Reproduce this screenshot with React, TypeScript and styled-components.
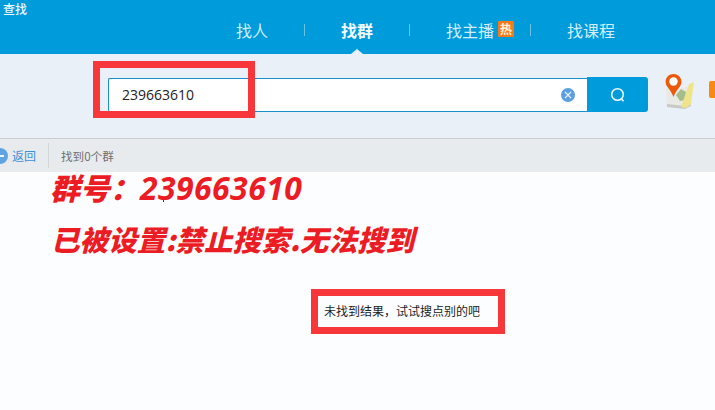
import React from "react";
import styled, { createGlobalStyle } from "styled-components";

const Global = createGlobalStyle`
  html, body { margin: 0; padding: 0; background: #fcfdff; }
  body { font-family: "Noto Sans CJK SC", "Liberation Sans", sans-serif; }
`;
const Page = styled.div`
  position: relative; width: 715px; height: 410px; overflow: hidden;
  display: flex; flex-direction: column; background: #fcfdff;
`;
const Header = styled.header`
  position: relative; flex: 0 0 54px; background: #009bdb; display: flex; align-items: flex-start;
`;
const Title = styled.div`
  position: absolute; left: 3px; top: 0; color: #eef8fd; font-size: 12px; line-height: 18px; font-weight: 500;
`;
const Nav = styled.nav`
  display: flex; align-items: center; height: 22px; margin: 19px 0 0 236px;
`;
const NavItem = styled.span<{ $active?: boolean }>`
  position: relative; color: ${p => (p.$active ? "#f4fbff" : "#d3eef9")};
  font-size: 16px; line-height: 22px; font-weight: ${p => (p.$active ? 700 : 400)}; white-space: nowrap;
`;
const Sep = styled.i<{ $w: number; $r: number }>`
  display: block; width: 1px; height: 12px; background: #6cc3e8;
  margin-left: ${p => p.$w}px; margin-right: ${p => p.$r}px;
`;
const Badge = styled.span`
  display: inline-block; width: 16px; height: 16px; background: #f47a1c; color: #fff3d8;
  font-size: 12px; line-height: 15px; text-align: center; font-weight: 700;
  margin-left: 4px; vertical-align: 3px; border-radius: 1px;
`;
const Caret = styled.i`
  position: absolute; left: 351px; top: 49px; width: 0; height: 0;
  border-left: 6px solid transparent; border-right: 6px solid transparent; border-bottom: 5px solid #eaf0f8;
`;
const SearchBand = styled.section`
  flex: 0 0 84px; background: #eaf0f8; display: flex; align-items: flex-start; padding: 23px 0 0 108px; box-sizing: border-box;
`;
const SearchBox = styled.div`
  box-sizing: border-box; width: 479px; height: 34px; margin-top: 1px; background: #fff;
  border: 1px solid #1a8fcb; border-right: 0; border-radius: 2px 0 0 2px;
  display: flex; align-items: center; justify-content: space-between; padding: 0 12px 0 13px;
`;
const Query = styled.span`
  font-family: "Open Sans", "Noto Sans", sans-serif; font-size: 14px; color: #222; line-height: 20px;
`;
const SearchButton = styled.div`
  width: 61px; height: 35px; background: #009bdb; border-radius: 0 3px 3px 0;
  display: flex; align-items: center; justify-content: center;
`;
const MapWrap = styled.div`
  margin: -3px 0 0 17px; width: 30px; height: 35px; flex: none;
`;
const OrangeTag = styled.div`
  width: 6px; height: 17px; margin: 4px 0 0 14px; background: #f9890f; border-radius: 2px 0 0 2px; flex: none;
`;
const Toolbar = styled.section`
  box-sizing: border-box; flex: 0 0 34px; background: #e8ebed; border-top: 1px solid #c9ccd0;
  display: flex; align-items: center; padding-left: 0;
`;
const BackIcon = styled.svg`
  width: 16px; height: 16px; margin-left: -8px; flex: none;
`;
const BackText = styled.span`
  font-size: 12px; color: #3d8fd6; margin-left: 4px; line-height: 16px;
`;
const ToolDivider = styled.i`
  display: block; width: 1px; height: 25px; background: #d3d6d9; margin: 0 12px 0 12px;
`;
const Count = styled.span`
  font-size: 11.6px; color: #6d6f70; line-height: 16px;
`;
const Content = styled.main`
  flex: 1; background: #fcfdff; padding: 131px 0 0 324px;
`;
const Empty = styled.div`
  font-size: 12px; color: #222; line-height: 16px; white-space: nowrap;
`;
const Frame = styled.div<{ $x: number; $y: number; $w: number; $h: number }>`
  position: absolute; box-sizing: border-box; left: ${p => p.$x}px; top: ${p => p.$y}px;
  width: ${p => p.$w}px; height: ${p => p.$h}px; border: 7px solid #f8373b;
`;
const Note = styled.div<{ $x: number; $y: number; $size: number }>`
  position: absolute; left: ${p => p.$x}px; top: ${p => p.$y}px; color: #ec1c24;
  font-size: ${p => p.$size}px; line-height: 34px; font-weight: 900; font-style: italic; white-space: nowrap;
`;
const Digits = styled.span`
  font-family: "Open Sans", sans-serif; font-size: 32px; font-weight: 700; letter-spacing: 0.4px;
`;
const Speck = styled.i`
  position: absolute; left: 163px; top: 200px; width: 1px; height: 2px; background: #333;
`;

export default function App() {
  return (
    <Page>
      <Global />
      <Header>
        <Title>查找</Title>
        <Nav>
          <NavItem>找人</NavItem>
          <Sep $w={36} $r={36} />
          <NavItem $active>找群</NavItem>
          <Sep $w={36} $r={36} />
          <NavItem>找主播<Badge>热</Badge></NavItem>
          <Sep $w={16} $r={36} />
          <NavItem>找课程</NavItem>
        </Nav>
        <Caret />
      </Header>
      <SearchBand>
        <SearchBox>
          <Query>239663610</Query>
          <svg width="14" height="14" viewBox="0 0 14 14" aria-hidden="true">
            <circle cx="7" cy="7" r="7" fill="#5c9fe0" />
            <path d="M4 4l6 6M10 4l-6 6" stroke="#eaf3fc" strokeWidth="1.1" />
          </svg>
        </SearchBox>
        <SearchButton>
          <svg width="16" height="16" viewBox="0 0 16 16" fill="none" aria-hidden="true">
            <circle cx="7.5" cy="7.5" r="5.8" stroke="#f0fafe" strokeWidth="1.5" />
            <path d="M11.6 12l1.9 2.2" stroke="#f0fafe" strokeWidth="1.5" />
          </svg>
        </SearchButton>
        <MapWrap>
          <svg width="30" height="35" viewBox="0 0 30 35" aria-hidden="true">
            <path d="M1 14l1 18 18 2 6-2 1-22-8 4z" fill="#e9e9e5" />
            <path d="M2 30l18 2 6-2v2l-6 3-18-2z" fill="#c9cac4" />
            <path d="M11 21l5-6 5 3-1 8-5 1-2-3z" fill="#a5bd8c" />
            <path d="M29 8L24 10 16 33l5 1 5-4z" fill="#efe48c" />
            <path d="M8.5 0C4 0 .6 3.4.6 7.8c0 5 5 7.5 7.900 15.200 2.900-7.700 8-10.200 8-15.200C16.500 3.400 13 0 8.500 0z" fill="#ea5a0c" />
            <circle cx="8.500" cy="7.500" r="4.200" fill="#fff" />
          </svg>
        </MapWrap>
        <OrangeTag />
      </SearchBand>
      <Toolbar>
        <BackIcon viewBox="0 0 16 16" aria-hidden="true">
          <circle cx="8" cy="8" r="8" fill="#5fa3e3" />
          <path d="M4 8h8" stroke="#fff" strokeWidth="1.8" />
        </BackIcon>
        <BackText>返回</BackText>
        <ToolDivider />
        <Count>找到0个群</Count>
      </Toolbar>
      <Content>
        <Empty>未找到结果，试试搜点别的吧</Empty>
      </Content>
      <Frame $x={93} $y={61} $w={162} $h={57} />
      <Frame $x={311} $y={289} $w={194} $h={45} />
      <Note $x={50} $y={170} $size={30}>群号：<Digits>239663610</Digits></Note>
      <Note $x={51} $y={222} $size={28.6}>已被设置:禁止搜索.无法搜到</Note>
      <Speck />
    </Page>
  );
}
